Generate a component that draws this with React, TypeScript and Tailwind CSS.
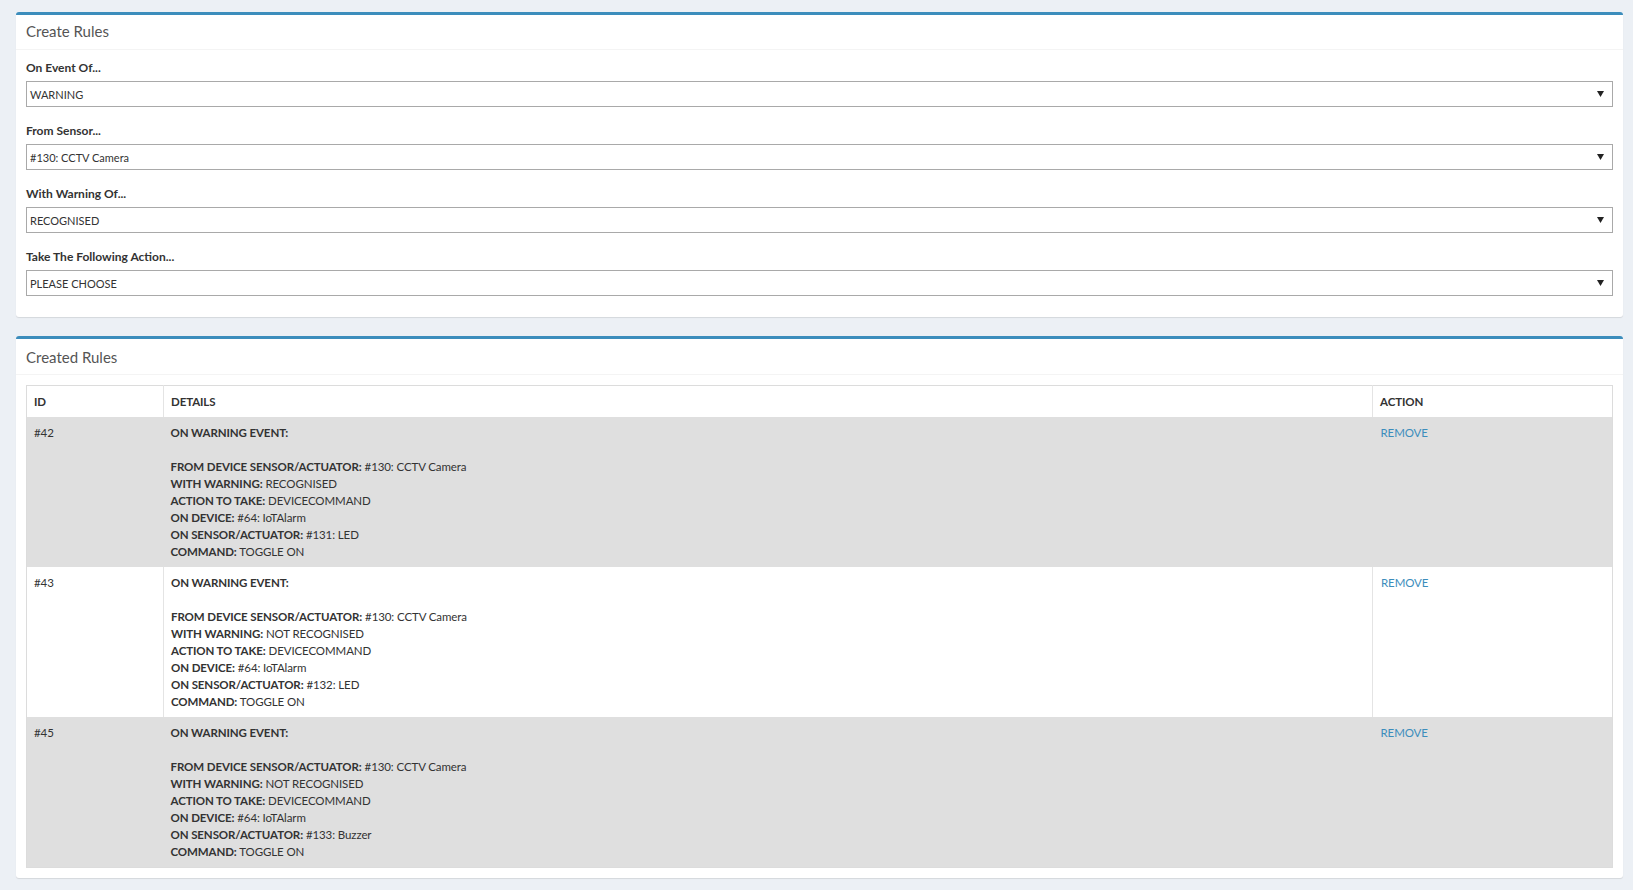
const FIELDS = [
  { label: "On Event Of...", value: "WARNING" },
  { label: "From Sensor...", value: "#130: CCTV Camera" },
  { label: "With Warning Of...", value: "RECOGNISED" },
  { label: "Take The Following Action...", value: "PLEASE CHOOSE" },
];

const RULES = [
  { id: "#42", warning: "RECOGNISED", sensor: "#131: LED", striped: true },
  { id: "#43", warning: "NOT RECOGNISED", sensor: "#132: LED", striped: false },
  { id: "#45", warning: "NOT RECOGNISED", sensor: "#133: Buzzer", striped: true },
];

function Caret() {
  return (
    <svg width="7" height="6" viewBox="0 0 7 6" className="shrink-0">
      <path d="M0 0 L7 0 L3.5 6 Z" fill="#222" />
    </svg>
  );
}

function Line({ k, v }: { k: string; v: string }) {
  return (
    <div>
      <span className="font-bold">{k}</span> {v}
    </div>
  );
}

export default function App() {
  return (
    <div
      className="min-h-screen bg-[#ecf0f5] pl-[16px] pr-[10px] pt-[12px] pb-[12px] text-[#333] text-[12px] leading-[17px]"
      style={{ fontFamily: "Lato, 'Open Sans', sans-serif" }}
    >
      {/* Create rules */}
      <div className="bg-white border-t-[3px] border-[#3c8dbc] rounded-[3px] shadow-[0_1px_1px_rgba(0,0,0,0.1)] mb-[19px]">
        <div className="px-[10px] h-[35px] pb-[1px] flex items-center border-b border-[#f4f4f4]">
          <h3 className="text-[15px] text-[#555]">Create Rules</h3>
        </div>
        <div className="px-[10px] pt-[9px] pb-[21px] flex flex-col gap-[15px]">
          {FIELDS.map((f) => (
            <div key={f.label}>
              <div className="font-bold mb-[5px]">{f.label}</div>
              <div className="h-[26px] border border-[#a9a9a9] flex items-center justify-between pl-[3px] pr-[8px] text-[11px]">
                <span>{f.value}</span>
                <Caret />
              </div>
            </div>
          ))}
        </div>
      </div>

      {/* Created rules */}
      <div className="bg-white border-t-[3px] border-[#3c8dbc] rounded-[3px] shadow-[0_1px_1px_rgba(0,0,0,0.1)]">
        <div className="px-[10px] h-[36px] pt-[1px] flex items-center border-b border-[#f4f4f4]">
          <h3 className="text-[15px] text-[#555]">Created Rules</h3>
        </div>
        <div className="p-[10px]">
          <table className="w-full border-collapse border border-[#dcdcdc] text-[11.5px] tracking-[-0.1px]">
            <thead>
              <tr className="text-left">
                <th className="w-[137px] px-[7px] py-[7px] border-r border-[#e4e4e4] font-bold">ID</th>
                <th className="px-[7px] py-[7px] border-r border-[#e4e4e4] font-bold">DETAILS</th>
                <th className="w-[240px] px-[7px] py-[7px] font-bold">ACTION</th>
              </tr>
            </thead>
            <tbody>
              {RULES.map((r) => (
                <tr key={r.id} className={r.striped ? "bg-[#dfdfdf]" : "bg-white"}>
                  <td className={`align-top px-[7px] py-[7px] ${r.striped ? "" : "border-r border-[#e4e4e4]"}`}>{r.id}</td>
                  <td className={`align-top px-[7px] py-[7px] ${r.striped ? "" : "border-r border-[#e4e4e4]"}`}>
                    <div className="font-bold">ON WARNING EVENT:</div>
                    <div className="h-[17px]" />
                    <Line k="FROM DEVICE SENSOR/ACTUATOR:" v="#130: CCTV Camera" />
                    <Line k="WITH WARNING:" v={r.warning} />
                    <Line k="ACTION TO TAKE:" v="DEVICECOMMAND" />
                    <Line k="ON DEVICE:" v="#64: IoTAlarm" />
                    <Line k="ON SENSOR/ACTUATOR:" v={r.sensor} />
                    <Line k="COMMAND:" v="TOGGLE ON" />
                  </td>
                  <td className="align-top px-[8px] py-[7px]">
                    <a className="text-[#3c8dbc] cursor-pointer">REMOVE</a>
                  </td>
                </tr>
              ))}
            </tbody>
          </table>
        </div>
      </div>
    </div>
  );
}
